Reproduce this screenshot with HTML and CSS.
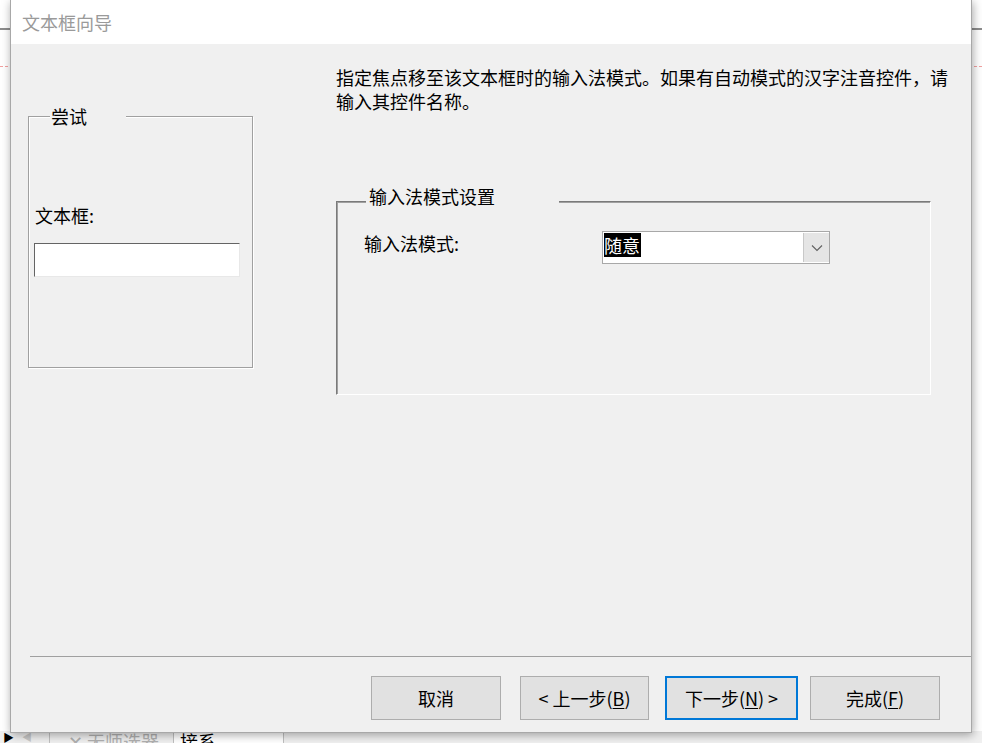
FILE: index.html
```html
<!DOCTYPE html>
<html lang="zh-CN">
<head>
    <meta charset="UTF-8">
    <title>文本框向导</title>
    <link rel="stylesheet" href="styles.css">
</head>
<body>
    <div class="desk">
        <div class="ruler"></div>
        <div class="guide"></div>
        <div class="tabs">
            <span class="tab-arrow">&#9654;</span>
            <span class="tab-nav">&#9664;</span>
            <span class="tab">&#10005; 无师选器</span>
            <span class="tab active">接系</span>
        </div>

        <div class="dialog">
            <div class="titlebar">文本框向导</div>

            <div class="body">
                <div class="main">
                    <div class="group preview">
                        <span class="legend legend-try">尝试</span>
                        <div class="field-label">文本框:</div>
                        <div class="textbox"></div>
                    </div>

                    <div class="right">
                        <p class="intro">指定焦点移至该文本框时的输入法模式。如果有自动模式的汉字注音控件，请<br>输入其控件名称。</p>

                        <div class="group ime">
                            <span class="legend legend-ime">输入法模式设置</span>
                            <div class="row">
                                <div class="row-label">输入法模式:</div>
                                <div class="combo">
                                    <span class="combo-value"><span class="selected">随意</span></span>
                                    <span class="combo-btn">
                                        <svg width="12" height="8" viewBox="0 0 12 8"><path d="M1 1.5 L6 6.5 L11 1.5" fill="none" stroke="#606060" stroke-width="1.1"/></svg>
                                    </span>
                                </div>
                            </div>
                        </div>
                    </div>
                </div>

                <div class="footer">
                    <div class="separator"></div>
                    <div class="buttons">
                        <button class="btn btn-cancel">取消</button>
                        <button class="btn btn-back">&lt; 上一步(<u>B</u>)</button>
                        <button class="btn btn-next">下一步(<u>N</u>) &gt;</button>
                        <button class="btn btn-finish">完成(<u>F</u>)</button>
                    </div>
                </div>
            </div>
        </div>
    </div>
</body>
</html>
```

FILE: styles.css
```css
* { box-sizing: border-box; }
body {
    margin: 0;
    font-family: "Noto Sans CJK SC", "Microsoft YaHei", sans-serif;
    background: #fff;
    overflow: hidden;
}
.desk {
    position: relative;
    width: 982px;
    height: 743px;
    display: flex;
    flex-direction: column;
    background: #fff;
}
.ruler {
    margin-top: 28px;
    height: 2px;
    background: #8c8c8c;
}
.guide {
    margin-top: 36px;
    border-top: 1px dashed #f2a0a0;
}
.tabs {
    margin-top: auto;
    height: 12px;
    display: flex;
    align-items: flex-start;
    background: #f0f0f0;
    overflow: hidden;
    font-size: 18px;
    line-height: 20px;
}
.tab-arrow {
    font-size: 11px;
    line-height: 12px;
    padding-left: 3px;
    width: 22px;
    color: #000;
}
.tab-nav {
    font-size: 10px;
    line-height: 12px;
    width: 28px;
    color: #c8c8c8;
    border-right: 1px solid #c0c0c0;
}
.tab {
    padding: 0 14px 0 18px;
    color: #b0b0b0;
    border-right: 1px solid #c0c0c0;
}
.tab.active {
    color: #000;
    background: #fff;
    width: 110px;
    padding-left: 6px;
}

.dialog {
    position: absolute;
    left: 10px;
    top: 0;
    width: 962px;
    height: 733px;
    display: flex;
    flex-direction: column;
    border: 1px solid #a8a8a8;
    border-top: none;
    background: #f0f0f0;
    box-shadow: 1px 2px 9px rgba(0,0,0,0.35);
}
.titlebar {
    height: 44px;
    background: #fff;
    color: #9a9a9a;
    font-size: 18px;
    line-height: 44px;
    padding-left: 11px;
}
.body {
    flex: 1;
    display: flex;
    flex-direction: column;
}
.main {
    flex: 1;
    display: flex;
    padding: 21px 0 0 17px;
    color: #000;
    font-size: 18px;
}

.group {
    position: relative;
}
.legend {
    position: absolute;
    background: #f0f0f0;
    line-height: 24px;
    padding-left: 1px;
}

.preview {
    margin-top: 51px;
    width: 225px;
    height: 252px;
    border: 1px solid #a0a0a0;
    box-shadow: inset 1px 1px 0 #fff, 1px 1px 0 #fff;
    padding: 86px 0 0 5px;
}
.legend-try {
    left: 21px;
    top: -13px;
    width: 76px;
}
.field-label {
    line-height: 24px;
    padding-left: 1px;
}
.textbox {
    margin-top: 16px;
    width: 206px;
    height: 34px;
    background: #fff;
    border-top: 1px solid #646464;
    border-left: 1px solid #646464;
    border-right: 1px solid #e8e8e8;
    border-bottom: 1px solid #e8e8e8;
}

.right {
    margin-left: 83px;
}
.intro {
    margin: 0;
    line-height: 24px;
}
.ime {
    margin-top: 88px;
    width: 595px;
    height: 194px;
    border-top: 1px solid #7a7a7a;
    border-left: 1px solid #7a7a7a;
    border-right: 1px solid #fff;
    border-bottom: 1px solid #fff;
    box-shadow: inset 1px 1px 0 #a0a0a0;
    padding: 29px 0 0 27px;
}
.legend-ime {
    left: 29px;
    top: -18px;
    width: 193px;
    padding-left: 3px;
}
.row {
    display: flex;
    align-items: flex-start;
}
.row-label {
    width: 238px;
    line-height: 24px;
}
.combo {
    width: 228px;
    height: 33px;
    display: flex;
    background: #fff;
    border: 1px solid #a8a8a8;
}
.combo-value {
    flex: 1;
    padding: 0 0 0 1px;
}
.selected {
    display: inline-block;
    background: #000;
    color: #fff;
    line-height: 24px;
    padding: 0 1px 0 0;
}
.combo-btn {
    width: 26px;
    margin: 1px 0;
    display: flex;
    align-items: center;
    justify-content: center;
    background: #e5e5e5;
    border-left: 1px solid #c8c8c8;
}

.footer {
    height: 76px;
}
.separator {
    margin-left: 19px;
    border-top: 1px solid #a0a0a0;
}
.buttons {
    display: flex;
    justify-content: flex-end;
    padding: 19px 31px 0 0;
}
.btn {
    height: 44px;
    width: 130px;
    background: #e1e1e1;
    border: 1px solid #adadad;
    font-family: "Noto Sans CJK SC", "Microsoft YaHei", sans-serif;
    font-size: 18px;
    color: #000;
    padding: 0;
}
.btn u { text-underline-offset: 2px; }
.btn-back {
    margin-left: 19px;
    width: 129px;
}
.btn-next {
    margin-left: 16px;
    width: 133px;
    border: 2px solid #0078d7;
}
.btn-finish { margin-left: 12px; }
```
